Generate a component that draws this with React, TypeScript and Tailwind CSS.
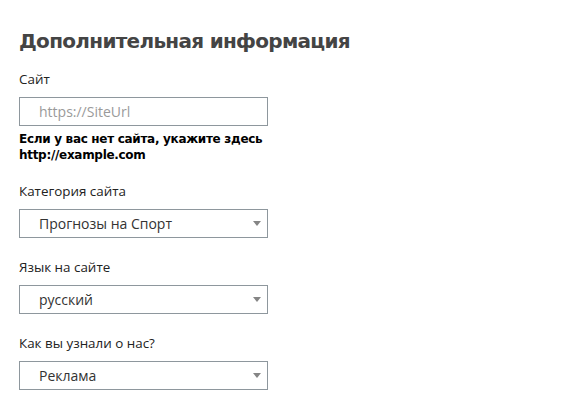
import React from "react";

function Arrow() {
  return (
    <svg width="8" height="5" viewBox="0 0 8 5" className="absolute right-[6px] top-[11px]">
      <path d="M0 0 H8 L4 5 Z" fill="#858585" />
    </svg>
  );
}

function Select({ value }: { value: string }) {
  return (
    <div className="relative w-[249px] h-[29px] border border-[#8e979d] bg-white flex items-center pl-[19px] text-[14px] text-[#333] font-['Open_Sans',sans-serif]">
      {value}
      <Arrow />
    </div>
  );
}

function Label({ children }: { children: React.ReactNode }) {
  return (
    <div className="text-[13.4px] leading-[20px] text-[#222] font-['Open_Sans',sans-serif] mb-[8px]">{children}</div>
  );
}

export default function App() {
  return (
    <div className="w-[568px] h-[416px] bg-white pl-[19px] pt-[28px]">
      <h1 className="font-['DejaVu_Sans',sans-serif] font-bold text-[20px] leading-[26px] text-[#444] tracking-[-0.7px]">
        Дополнительная информация
      </h1>
      <div className="mt-[15px]">
        <Label>Сайт</Label>
        <div className="w-[249px] h-[29px] border border-[#8e979d] bg-white flex items-center pl-[19px] text-[14px] text-[#9a9a9a] font-['Open_Sans',sans-serif]">
          https://SiteUrl
        </div>
        <div className="mt-[5px] font-['DejaVu_Sans',sans-serif] font-bold text-[12px] leading-[16px] text-black tracking-[-0.3px]">
          Если у вас нет сайта, укажите здесь
          <br />
          http://example.com
        </div>
      </div>
      <div className="mt-[18px]">
        <Label>Категория сайта</Label>
        <Select value="Прогнозы на Спорт" />
      </div>
      <div className="mt-[19px]">
        <Label>Язык на сайте</Label>
        <Select value="русский" />
      </div>
      <div className="mt-[19px]">
        <Label>Как вы узнали о нас?</Label>
        <Select value="Реклама" />
      </div>
    </div>
  );
}
